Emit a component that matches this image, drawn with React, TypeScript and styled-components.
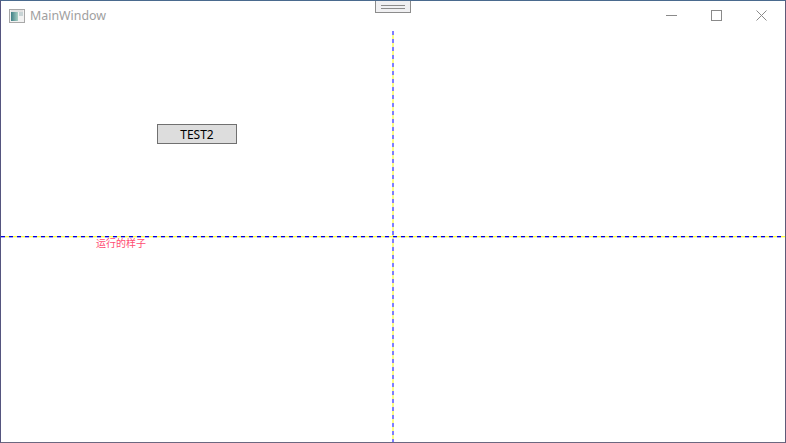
import styled, { createGlobalStyle } from 'styled-components';

const GlobalStyle = createGlobalStyle`
    html, body {
        margin: 0;
        padding: 0;
        background: #ffffff;
    }
    #root {
        width: 786px;
        height: 443px;
    }
`
const Win = styled.div`
    position: relative;
    width: 786px;
    height: 443px;
    box-sizing: border-box;
    display: flex;
    flex-direction: column;
    background: #ffffff;
    border: 1px solid #55557f;
    border-top-color: #4a6a8e;
    border-right-color: #5f5a78;
    border-bottom-color: #6b6880;
    font-family: "Noto Sans", "Liberation Sans", sans-serif;
    overflow: hidden;
`
const TitleBar = styled.div`
    height: 30px;
    flex: none;
    display: flex;
    align-items: center;
    padding-left: 8px;
`
const AppIcon = styled.svg`
    width: 16px;
    height: 14px;
    flex: none;
`
const Title = styled.div`
    margin: 0 0 1px 5px;
    font-size: 12.4px;
    color: #a0a0a0;
    flex: 1;
`
const Controls = styled.div`
    display: flex;
    align-self: flex-start;
    height: 28px;
    padding-right: 1px;
`
const Control = styled.div`
    width: 45px;
    display: flex;
    align-items: center;
    justify-content: center;
    svg {
        width: 11px;
        height: 11px;
        display: block;
    }
`
const Handle = styled.div`
    position: absolute;
    top: -1px;
    left: 374px;
    width: 36px;
    height: 13px;
    box-sizing: border-box;
    background: #f0f0f2;
    border: 1px solid #8c8c8c;
    display: flex;
    flex-direction: column;
    justify-content: center;
    align-items: center;
    gap: 2px;
`
const HandleBar = styled.div`
    width: 24px;
    height: 1px;
    background: #8c8c8c;
`
const Board = styled.div`
    flex: 1;
    display: grid;
    grid-template-columns: 391px 2px 1fr;
    grid-template-rows: 205px 2px 1fr;
`
const TopPane = styled.div`
    grid-column: 1;
    grid-row: 1;
    padding: 93px 0 0 156px;
`
const BottomPane = styled.div`
    grid-column: 1;
    grid-row: 3;
    padding-left: 95px;
`
const VLine = styled.div`
    grid-column: 2;
    grid-row: 1 / -1;
    background: repeating-linear-gradient(to bottom, #7d7dff 0 4px, #ffff80 4px 8px);
`
const HLine = styled.div`
    grid-column: 1 / -1;
    grid-row: 2;
    z-index: 1;
    background:
        linear-gradient(to bottom, transparent 50%, rgba(255, 255, 255, 0.65) 50%),
        repeating-linear-gradient(to right, #0000e0 0 4px, #ffff40 4px 8px);
`
const TestButton = styled.button`
    display: block;
    width: 80px;
    height: 20px;
    padding: 0;
    box-sizing: border-box;
    background: #dddddd;
    border: 1px solid #707070;
    color: #000000;
    font-family: "Noto Sans", "Liberation Sans", sans-serif;
    font-size: 12px;
`
const Note = styled.div`
    font-family: "Noto Sans CJK SC", sans-serif;
    font-size: 10px;
    line-height: 10px;
    color: #ff4d73;
`

function App() {
    return (
        <>
            <GlobalStyle />
            <Win>
                <TitleBar>
                    <AppIcon viewBox="0 0 16 14">
                        <defs>
                            <linearGradient id="iconFill" x1="0" y1="0" x2="1" y2="0">
                                <stop offset="0" stopColor="#3f7f86" />
                                <stop offset="1" stopColor="#a9cfc4" />
                            </linearGradient>
                        </defs>
                        <rect x="0.5" y="0.5" width="15" height="13" fill="#f2f2f2" stroke="#a8a8a8" />
                        <rect x="2" y="3" width="7" height="9" fill="url(#iconFill)" />
                        <rect x="10" y="3" width="4" height="4" fill="#c8d4d6" />
                        <rect x="2" y="1.5" width="12" height="1" fill="#d0d0d0" />
                    </AppIcon>
                    <Title>MainWindow</Title>
                    <Controls>
                        <Control>
                            <svg viewBox="0 0 11 11"><path d="M0 5.5H11" stroke="#8a8a8a" /></svg>
                        </Control>
                        <Control>
                            <svg viewBox="0 0 11 11"><rect x="0.5" y="0.5" width="10" height="10" fill="none" stroke="#8a8a8a" /></svg>
                        </Control>
                        <Control>
                            <svg viewBox="0 0 11 11"><path d="M0.5 0.5L10.5 10.5M10.5 0.5L0.5 10.5" stroke="#8a8a8a" /></svg>
                        </Control>
                    </Controls>
                </TitleBar>
                <Board>
                    <TopPane>
                        <TestButton>TEST2</TestButton>
                    </TopPane>
                    <VLine />
                    <HLine />
                    <BottomPane>
                        <Note>运行的样子</Note>
                    </BottomPane>
                </Board>
                <Handle>
                    <HandleBar />
                    <HandleBar />
                </Handle>
            </Win>
        </>
    )
}

export default App
